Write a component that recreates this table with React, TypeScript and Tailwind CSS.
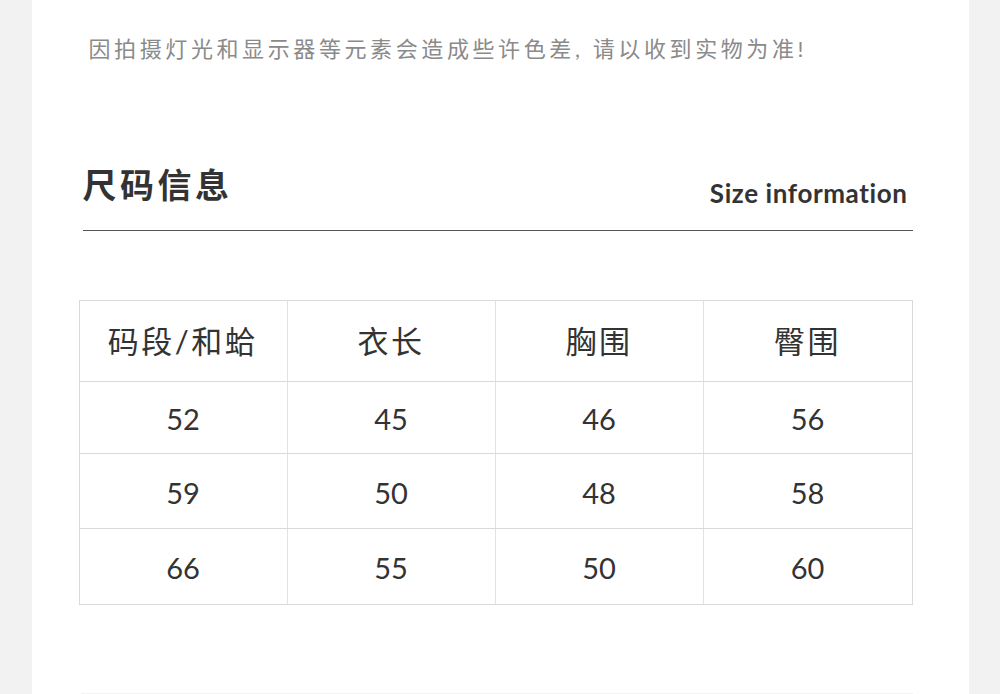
const rows = [
  ["52", "45", "46", "56"],
  ["59", "50", "48", "58"],
  ["66", "55", "50", "60"],
];

const heads = ["码段/和蛤", "衣长", "胸围", "臀围"];

export default function App() {
  return (
    <div
      className="min-h-screen bg-[#f2f2f2] flex justify-center"
      style={{ fontFamily: 'Lato, "Noto Sans CJK SC", sans-serif' }}
    >
      <div className="w-[937px] h-[694px] bg-white overflow-hidden">
        {/* Notice */}
        <p className="pl-[57px] pt-[35px] text-[22px] leading-[28px] tracking-[3.6px] text-[#8a8a8a]">
          因拍摄灯光和显示器等元素会造成些许色差, 请以收到实物为准!
        </p>

        {/* Title */}
        <div className="ml-[51px] mr-[56px] mt-[102px] flex items-end justify-between border-b-[1.5px] border-[#555] pb-[25px]">
          <h2 className="text-[34px] leading-[40px] font-bold tracking-[3.5px] text-[#333]">尺码信息</h2>
          <span className="text-[26px] leading-[30px] font-bold tracking-[0.6px] text-[#333] pr-[5px] mb-[-3px]">
            Size information
          </span>
        </div>

        {/* Table */}
        <div className="ml-[47px] mt-[69px] w-[834px] border border-[#d9d9d9] text-[#333]">
          <div className="grid grid-cols-4 h-[81px] border-b border-[#d9d9d9]">
            {heads.map((h, i) => (
              <div
                key={h}
                className={`flex items-center justify-center text-[31px] tracking-[2.5px] ${i < 3 ? "border-r border-[#e2e2e2]" : ""}`}
              >
                {h}
              </div>
            ))}
          </div>
          {rows.map((r, ri) => (
            <div
              key={ri}
              className={`grid grid-cols-4 ${ri === 0 ? "h-[72px]" : "h-[75px]"} ${ri < 2 ? "border-b border-[#d9d9d9]" : ""}`}
            >
              {r.map((v, i) => (
                <div
                  key={i}
                  className={`flex items-center justify-center pt-[3px] text-[29px] ${i < 3 ? "border-r border-[#e2e2e2]" : ""}`}
                >
                  {v}
                </div>
              ))}
            </div>
          ))}
        </div>

        <div className="ml-[49px] mr-[56px] mt-[88px] h-[2px] bg-[#f3f3f3]" />
      </div>
    </div>
  );
}
